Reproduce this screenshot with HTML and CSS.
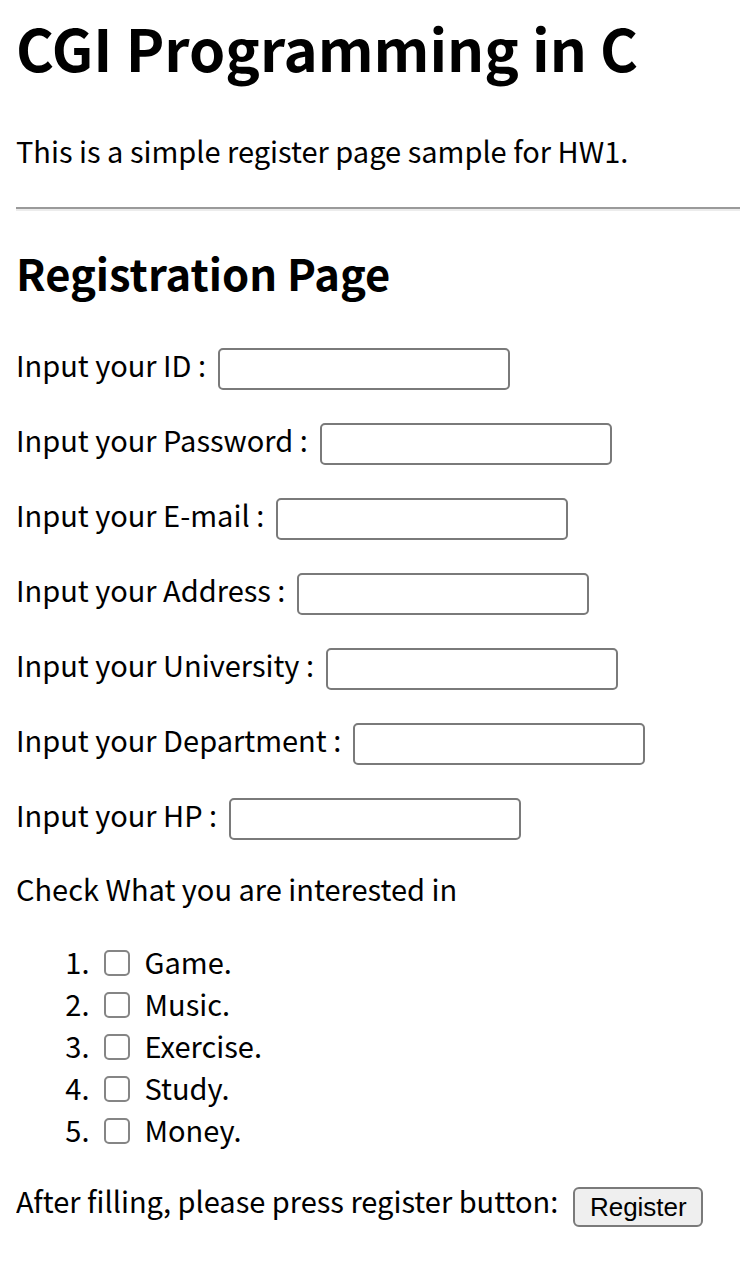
FILE: index.html
```html
<!DOCTYPE html>
<html lang="en">
<head>
<meta charset="utf-8">
<title>CGI Programming in C</title>
<link rel="stylesheet" href="styles.css">
</head>
<body>
<h1 class="title">CGI Programming in C</h1>
<p class="intro">This is a simple register page sample for HW1.</p>
<hr class="rule">
<h2 class="subtitle">Registration Page</h2>
<form class="form">
  <div class="field"><label class="label" for="id">Input your ID :</label><input class="text" id="id" type="text"></div>
  <div class="field"><label class="label" for="pw">Input your Password :</label><input class="text" id="pw" type="password"></div>
  <div class="field"><label class="label" for="em">Input your E-mail :</label><input class="text" id="em" type="text"></div>
  <div class="field"><label class="label" for="ad">Input your Address :</label><input class="text" id="ad" type="text"></div>
  <div class="field"><label class="label" for="un">Input your University :</label><input class="text" id="un" type="text"></div>
  <div class="field"><label class="label" for="dp">Input your Department :</label><input class="text" id="dp" type="text"></div>
  <div class="field"><label class="label" for="hp">Input your HP :</label><input class="text" id="hp" type="text"></div>
  <p class="check-title">Check What you are interested in</p>
  <ol class="interests">
    <li class="item"><input class="box" type="checkbox"> Game.</li>
    <li class="item"><input class="box" type="checkbox"> Music.</li>
    <li class="item"><input class="box" type="checkbox"> Exercise.</li>
    <li class="item"><input class="box" type="checkbox"> Study.</li>
    <li class="item"><input class="box" type="checkbox"> Money.</li>
  </ol>
  <div class="submit-row"><span class="submit-label">After filling, please press register button:</span><button class="button" type="button">Register</button></div>
</form>
</body>
</html>
```

FILE: styles.css
```css
html, body {
  background: #ffffff;
}
body {
  margin: 0 0 40px 16px;
  font-family: "Noto Sans CJK KR", "Noto Sans", sans-serif;
  font-size: 29px;
  color: #000000;
}
.title {
  margin: 15px 0 0;
  font-size: 58px;
  line-height: 64px;
  font-weight: 700;
}
.intro {
  margin: 50px 0 0;
  line-height: 42px;
}
.rule {
  margin: 36px 0 0;
  height: 0;
  border: none;
  border-top: 2px solid #9a9a9a;
  border-bottom: 2px solid #ececec;
}
.subtitle {
  margin: 38px 0 0;
  font-size: 43.5px;
  line-height: 48px;
  font-weight: 700;
}
.form {
  margin: 51px 0 0;
  display: flex;
  flex-direction: column;
}
.field {
  display: flex;
  align-items: flex-start;
  gap: 12px;
  margin-bottom: 33px;
}
.label {
  line-height: 33px;
  white-space: nowrap;
}
.text {
  box-sizing: border-box;
  width: 292px;
  height: 42px;
  margin: 0;
  border: 2px solid #7a7a7a;
  border-radius: 5px;
  background: #ffffff;
  font: inherit;
  padding: 0 6px;
}
.check-title {
  margin: -6px 0 0;
  line-height: 42px;
}
.interests {
  margin: 31px 0 0;
  padding-left: 80px;
}
.item {
  line-height: 42px;
}
.box {
  appearance: none;
  -webkit-appearance: none;
  box-sizing: border-box;
  width: 26px;
  height: 26px;
  margin: 10px 8px 0 8px;
  vertical-align: top;
  border: 2px solid #858585;
  border-radius: 5px;
  background: #ffffff;
}
.submit-row {
  margin-top: 37px;
  display: flex;
  align-items: flex-start;
  gap: 15px;
}
.submit-label {
  line-height: 26px;
  white-space: nowrap;
}
.button {
  box-sizing: border-box;
  width: 130px;
  height: 40px;
  margin: 0;
  padding: 0;
  border: 2px solid #7a7a7a;
  border-radius: 6px;
  background: #efefef;
  font-family: "Liberation Sans", Arial, sans-serif;
  font-size: 26px;
  color: #000000;
}
```
